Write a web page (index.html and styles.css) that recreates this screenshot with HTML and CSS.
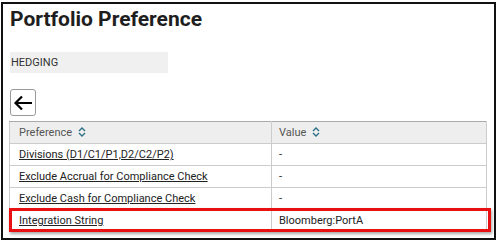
FILE: index.html
```html
<!DOCTYPE html>
<html lang="en">

<head>
    <meta charset="UTF-8">
    <meta name="viewport" content="width=device-width, initial-scale=1.0">
    <title>Portfolio Preference</title>
    <link rel="stylesheet" href="styles.css">
</head>

<body>
    <div class="frame">
        <h1 class="title">Portfolio Preference</h1>
        <div class="portfolio-name">HEDGING</div>
        <button class="back-btn" title="Back">
            <svg width="20" height="16" viewBox="0 0 20 16">
                <path d="M19 8H2.5M9 1.5L2.5 8L9 14.5" fill="none" stroke="#000" stroke-width="2.2"/>
            </svg>
        </button>

        <div class="table-wrap">
            <table class="pref-table">
                <thead>
                    <tr>
                        <th class="col-pref">Preference <span class="sort">
                            <svg width="8" height="10" viewBox="0 0 8 10">
                                <path d="M1 4L4 1L7 4M1 6L4 9L7 6" fill="none" stroke="#2c6f86" stroke-width="1.4"/>
                            </svg></span></th>
                        <th class="col-value">Value <span class="sort">
                            <svg width="8" height="10" viewBox="0 0 8 10">
                                <path d="M1 4L4 1L7 4M1 6L4 9L7 6" fill="none" stroke="#2c6f86" stroke-width="1.4"/>
                            </svg></span></th>
                    </tr>
                </thead>
                <tbody>
                    <tr>
                        <td><a href="#">Divisions (D1/C1/P1,D2/C2/P2)</a></td>
                        <td class="col-value">-</td>
                    </tr>
                    <tr>
                        <td><a href="#">Exclude Accrual for Compliance Check</a></td>
                        <td class="col-value">-</td>
                    </tr>
                    <tr>
                        <td><a href="#">Exclude Cash for Compliance Check</a></td>
                        <td class="col-value">-</td>
                    </tr>
                    <tr>
                        <td><a href="#">Integration String</a></td>
                        <td class="col-value">Bloomberg:PortA</td>
                    </tr>
                </tbody>
            </table>
            <div class="highlight"></div>
        </div>
    </div>
</body>

</html>
```

FILE: styles.css
```css
body {
    margin: 0;
    font-family: Roboto, "Liberation Sans", sans-serif;
    background: #fff;
    color: #222;
}

.frame {
    margin: 2px 3px 4px 1px;
    border: 2px solid #111;
    padding: 2px 7px 0 6px;
    box-sizing: border-box;
    height: 238px;
}

.title {
    margin: 0;
    font-size: 21px;
    line-height: 26px;
    font-weight: bold;
    color: #1e1e1e;
    padding-left: 1px;
}

.portfolio-name {
    margin-top: 20px;
    margin-left: 1px;
    width: 157px;
    height: 21px;
    line-height: 21px;
    padding-left: 1px;
    background: #f0f0f0;
    font-size: 11px;
    color: #333;
}

.back-btn {
    display: flex;
    align-items: center;
    justify-content: center;
    margin: 16px 0 0 1px;
    width: 26px;
    height: 27px;
    padding: 0;
    border: 1px solid #999;
    border-radius: 3px;
    background: #fff;
}

.table-wrap {
    position: relative;
    margin-top: 5px;
}

.pref-table {
    width: 478px;
    border-collapse: collapse;
    font-size: 11px;
}

.pref-table th,
.pref-table td {
    height: 21px;
    padding: 0 8px 0 9px;
    border: 1px solid #ccc;
    text-align: left;
    color: #222;
}

.pref-table th {
    background: #eee;
    border-top: 1px solid #aaa;
    font-weight: normal;
    color: #555;
}

.pref-table .col-pref {
    width: 244px;
}

.pref-table .col-value {
    padding-left: 7px;
}

.pref-table a {
    color: #222;
    text-decoration: underline;
}

.sort {
    margin-left: 3px;
    vertical-align: middle;
}

.sort svg {
    display: inline-block;
    vertical-align: -1px;
}

.highlight {
    position: absolute;
    left: 0;
    right: -4px;
    bottom: 0;
    height: 24px;
    border: 3px solid #e81010;
    box-sizing: border-box;
    box-shadow: 1px 2px 3px rgba(0, 0, 0, 0.35);
}
```
